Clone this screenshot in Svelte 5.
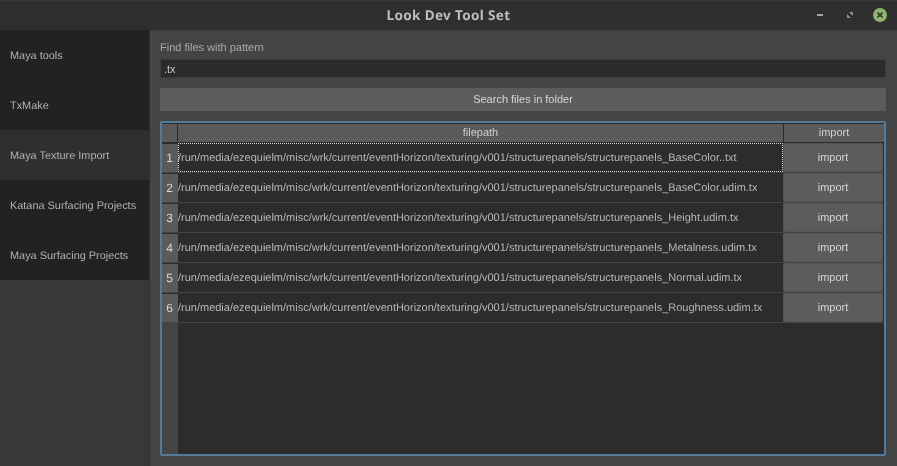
<script lang="ts">
  const tabs = ['Maya tools', 'TxMake', 'Maya Texture Import', 'Katana Surfacing Projects', 'Maya Surfacing Projects'];
  const base = '/run/media/ezequielm/misc/wrk/current/eventHorizon/texturing/v001/structurepanels/structurepanels_';
  const files = ['BaseColor..txt', 'BaseColor.udim.tx', 'Height.udim.tx', 'Metalness.udim.tx', 'Normal.udim.tx', 'Roughness.udim.tx'];
</script>

<div class="window">
  <header class="titlebar">
    <span class="title">Look Dev Tool Set</span>
    <div class="controls">
      <span class="ctl"><svg width="8" height="8" viewBox="0 0 8 8"><rect x="1" y="3" width="6" height="2" fill="#a5a5a5" /></svg></span>
      <span class="ctl"><svg width="8" height="8" viewBox="0 0 8 8"><path d="M3 1H7V5ZM1 3L5 7H1Z" fill="#8f8f8f" /></svg></span>
      <span class="ctl close">
        <svg width="8" height="8" viewBox="0 0 8 8"><path d="M1.5 1.5L6.5 6.5M6.5 1.5L1.5 6.5" stroke="#2c2f2a" stroke-width="1.7" /></svg>
      </span>
    </div>
  </header>

  <div class="body">
    <nav class="sidebar">
      {#each tabs as tab, i}
        <div class="tab" class:active={i === 2}>{tab}</div>
      {/each}
    </nav>

    <main class="panel">
      <label class="label" for="pattern">Find files with pattern</label>
      <input id="pattern" class="pattern" value=".tx" />
      <button class="search" type="button">Search files in folder</button>

      <div class="table">
        <div class="row head">
          <div class="corner"></div>
          <div class="col">filepath</div>
          <div class="col">import</div>
        </div>
        {#each files as file, i}
          <div class="row item">
            <div class="num">{i + 1}</div>
            <div class="path" class:current={i === 0}>{base + file}</div>
            <div class="action"><button type="button">import</button></div>
          </div>
        {/each}
        <div class="rest"><div class="gutter"></div></div>
      </div>
    </main>
  </div>
</div>

<style>
  :global(body) {
    margin: 0;
    background: #444;
  }

  .window {
    display: flex;
    flex-direction: column;
    height: 466px;
    font: 11px/1 "Liberation Sans", Arial, sans-serif;
    color: #c4c4c4;
    overflow: hidden;
    text-rendering: geometricPrecision;
    will-change: transform;
  }

  .titlebar {
    position: relative;
    flex: 0 0 30px;
    display: flex;
    align-items: center;
    justify-content: center;
    box-sizing: border-box;
    background: #2f2f2f;
    border-top: 1px solid #383838;
  }

  .title {
    font: bold 13.5px "Noto Sans", sans-serif;
    letter-spacing: 0.35px;
    color: #bdbdbd;
    margin-top: -1px;
  }

  .controls {
    position: absolute;
    top: 0;
    right: 10px;
    height: 28px;
    display: flex;
    align-items: center;
    gap: 16px;
  }

  .ctl {
    display: flex;
    align-items: center;
    justify-content: center;
    width: 14px;
    height: 14px;
  }

  .close {
    border-radius: 50%;
    background: #8fb56c;
  }

  .body {
    flex: 1;
    display: flex;
    min-height: 0;
  }

  .sidebar {
    flex: 0 0 149px;
    background: #383838;
    border-right: 1px solid #2e2e2e;
  }

  .tab {
    height: 50px;
    box-sizing: border-box;
    display: flex;
    align-items: center;
    padding: 2px 0 0 10px;
    background: #222;
    color: #b0b0b0;
    font-size: 10.92px;
  }

  .tab.active {
    background: #2f2f2f;
  }

  .panel {
    flex: 1;
    display: flex;
    flex-direction: column;
    padding: 12px 11px 10px 10px;
    border-top: 1px solid #3a3a3a;
    min-width: 0;
  }

  .label {
    color: #aaa;
    margin-bottom: 5px;
  }

  .pattern {
    box-sizing: border-box;
    height: 19px;
    padding: 0 3px;
    border: 1px solid #3c3c3c;
    border-radius: 2px;
    background: #2b2b2b;
    color: #c4c4c4;
    font: inherit;
    outline: 0;
  }

  .search {
    height: 23px;
    margin-top: 10px;
    border: 0;
    padding: 0;
    background: #5c5c5c;
    color: #d6d6d6;
    font: inherit;
  }

  .table {
    flex: 1;
    display: flex;
    flex-direction: column;
    margin-top: 10px;
    box-sizing: border-box;
    border: 2px solid #517a9b;
    border-radius: 2px;
    background: #2c2c2c;
    min-height: 0;
  }

  .row {
    display: grid;
    grid-template-columns: 16px 1fr 100px;
  }

  .head {
    height: 20px;
    background: #5a5a5a;
    border-bottom: 1px solid #2a2a2a;
    box-sizing: border-box;
    border-top: 1px solid #2a2a2a;
  }

  .corner,
  .col {
    border-right: 1px solid #2a2a2a;
  }

  .col {
    display: flex;
    align-items: center;
    justify-content: center;
    color: #d0d0d0;
  }

  .col:last-child {
    border-right: 0;
  }

  .item {
    height: 30px;
    box-sizing: border-box;
    border-bottom: 1px solid #444;
  }

  .num {
    display: flex;
    align-items: center;
    justify-content: center;
    padding-right: 1px;
    box-sizing: border-box;
    margin-top: 1px;
    background: #5a5a5a;
    color: #d8d8d8;
    font-size: 12px;
  }

  .path {
    display: flex;
    align-items: center;
    margin-right: 1px;
    padding: 1px 2px 0 0;
    color: #b8b8b8;
    font-size: 10.995px;
    white-space: nowrap;
    overflow: hidden;
  }

  .path.current {
    outline: 1px dotted #d8d8d8;
    outline-offset: -1px;
  }

  .action {
    display: flex;
    margin-left: -1px;
    padding-right: 1px;
  }

  .action button {
    flex: 1;
    border: 0;
    border-radius: 2px;
    padding: 0;
    background: #5c5c5c;
    color: #d6d6d6;
    font: inherit;
    box-shadow: inset 0 0 0 1px #555;
  }

  .rest {
    flex: 1;
    display: flex;
  }

  .gutter {
    width: 16px;
    background: #444;
  }
</style>
